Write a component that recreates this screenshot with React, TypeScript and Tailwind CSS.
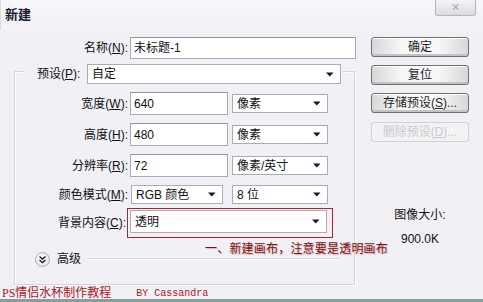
import React from "react";

const Arrow = () => (
  <svg width="8" height="5" viewBox="0 0 8 5" className="shrink-0">
    <path d="M0 0.5h7.5L3.75 4.5z" fill="#15153a" />
  </svg>
);

function Select({
  text,
  className,
}: {
  text: string;
  className: string;
}) {
  return (
    <div
      className={
        "flex items-center justify-between bg-white border border-[#a7adbb] pl-[4px] pr-[6px] shrink-0 " +
        className
      }
    >
      <span className="whitespace-nowrap">{text}</span>
      <Arrow />
    </div>
  );
}

function Input({ text, className }: { text: string; className: string }) {
  return (
    <div
      className={
        "flex items-center bg-white border border-[#a5abb8] border-t-[#8f96a6] pl-[3px] shrink-0 " +
        className
      }
    >
      <span className="whitespace-nowrap">{text}</span>
    </div>
  );
}

function Label({ children, className }: { children: React.ReactNode; className: string }) {
  return <div className={"whitespace-nowrap shrink-0 " + className}>{children}</div>;
}

const U = ({ c }: { c: string }) => <span className="underline underline-offset-[1px]">{c}</span>;

function Btn({ children, disabled }: { children: React.ReactNode; disabled?: boolean }) {
  return (
    <div
      className={
        "h-[20px] w-[98px] rounded-[3px] flex items-center justify-center whitespace-nowrap " +
        (disabled
          ? "border border-[#cfd0d4] bg-[#f3f3f5] text-[#c8c9cd]"
          : "border border-[#6f7074] bg-[linear-gradient(90deg,#d8d8d8,#f6f6f6_30%,#f6f6f6_70%,#d8d8d8)] text-[#1e1e1e] shadow-[inset_0_1px_0_#ffffff,inset_0_-2px_0_#c4c4c4]")
      }
    >
      {children}
    </div>
  );
}

export default function App() {
  return (
    <div className="w-[483px] h-[302px] overflow-hidden relative bg-[#f0f0f5] text-[12px] leading-[14px] text-[#111] font-['Liberation_Sans','Noto_Sans_CJK_SC',sans-serif] flex flex-col">
      {/* title bar */}
      <div className="h-[30px] flex items-start justify-between bg-[linear-gradient(#f7f7fa,#f1f1f6)] border-l border-[#d8d8de]">
        <div className="pl-[4px] pt-[7px] text-[13px] leading-[16px] font-bold text-[#1a1a30]">新建</div>
        <div className="mr-[7px] w-[41px] h-[16px] border border-t-0 border-[#b4b4ba] rounded-b-[3px] bg-[linear-gradient(#f4f4f6,#dcdce0)] flex items-center justify-center text-[#a8a8b0] text-[11px] leading-[11px]">
          ✕
        </div>
      </div>

      {/* body */}
      <div className="h-[257px] flex">
        {/* left */}
        <div className="w-[358px] flex flex-col shrink-0">
          <div className="mt-[7px] h-[22px] flex items-center">
            <Label className="w-[128px] text-right">
              名称(<U c="N" />):
            </Label>
            <Input text="未标题-1" className="ml-[2px] w-[226px] h-[22px]" />
          </div>

          <div className="mt-[12px] ml-[14px] w-[341px] h-[214px] border border-[#d3d6de] shadow-[inset_1px_1px_0_#ffffff,1px_1px_0_#ffffff] flex flex-col">
            <div className="-mt-[8px] ml-[10px] w-[318px] h-[20px] flex items-center bg-[#f0f0f5]">
              <Label className="w-[62px] pl-[12px]">
                预设(<U c="P" />):
              </Label>
              <Select text="自定" className="w-[254px] h-[20px]" />
            </div>

            <div className="mt-[8px] h-[23px] flex items-center">
              <Label className="w-[113px] text-right">
                宽度(<U c="W" />):
              </Label>
              <Input text="640" className="ml-[2px] w-[98px] h-[23px]" />
              <Select text="像素" className="ml-[4px] w-[96px] h-[19px]" />
            </div>

            <div className="mt-[8px] h-[23px] flex items-center">
              <Label className="w-[113px] text-right">
                高度(<U c="H" />):
              </Label>
              <Input text="480" className="ml-[2px] w-[98px] h-[23px]" />
              <Select text="像素" className="ml-[4px] w-[96px] h-[19px]" />
            </div>

            <div className="mt-[8px] h-[23px] flex items-center">
              <Label className="w-[113px] text-right">
                分辨率(<U c="R" />):
              </Label>
              <Input text="72" className="ml-[2px] w-[98px] h-[23px]" />
              <Select text="像素/英寸" className="ml-[4px] w-[96px] h-[19px]" />
            </div>

            <div className="mt-[8px] h-[19px] flex items-center">
              <Label className="w-[113px] text-right">
                颜色模式(<U c="M" />):
              </Label>
              <Select text="RGB 颜色" className="ml-[3px] w-[92px] h-[19px]" />
              <Select text="8 位" className="ml-[9px] w-[96px] h-[19px]" />
            </div>

            <div className="mt-[4px] h-[30px] flex items-center">
              <Label className="w-[112px] text-right pr-[1px]">
                背景内容(<U c="C" />):
              </Label>
              <div className="w-[206px] h-[30px] border border-[#9c2a3a] bg-[#fbeef0] pl-[2px] pt-[1px] shrink-0">
                <Select text="透明" className="w-[197px] h-[23px]" />
              </div>
            </div>

            <div className="mt-[13px] h-[16px] flex items-center">
              <div className="ml-[20px] w-[15px] h-[15px] rounded-full border border-[#a9abb4] bg-[radial-gradient(circle_at_40%_35%,#ffffff,#dcdde3)] flex items-center justify-center shrink-0">
                <svg width="9" height="9" viewBox="0 0 9 9">
                  <path d="M1.5 1.5L4.5 4L7.5 1.5M1.5 5L4.5 7.5L7.5 5" fill="none" stroke="#1e1e2a" strokeWidth="1.4" />
                </svg>
              </div>
              <div className="ml-[7px] whitespace-nowrap">高级</div>
              <div className="ml-[7px] mr-[14px] flex-1 h-[2px] border-t border-[#d6d8df] border-b-white border-b" />
            </div>
          </div>
        </div>

        {/* right */}
        <div className="ml-[13px] w-[98px] flex flex-col items-center">
          <div className="mt-[7px]">
            <Btn>确定</Btn>
          </div>
          <div className="mt-[8px]">
            <Btn>复位</Btn>
          </div>
          <div className="mt-[8px]">
            <Btn>
              存储预设(<U c="S" />)...
            </Btn>
          </div>
          <div className="mt-[9px]">
            <Btn disabled>
              删除预设(<U c="D" />)...
            </Btn>
          </div>
          <div className="mt-[65px] leading-[16px] whitespace-nowrap">图像大小:</div>
          <div className="mt-[8px] leading-[16px] whitespace-nowrap">900.0K</div>
        </div>
      </div>

      {/* footer */}
      <div className="h-[15px] flex items-start border-b-[3px] border-[#7ea39c] bg-[#f0f0f5]">
        <div className="pl-[2px] text-[12px] leading-[12px] text-[#b0161e] whitespace-nowrap font-['Liberation_Serif','Noto_Sans_CJK_SC',serif]">
          PS情侣水杯制作教程
        </div>
        <div className="ml-[25px] mt-[1px] text-[10px] leading-[12px] text-[#b0161e] whitespace-nowrap font-['Liberation_Mono',monospace]">
          BY Cassandra
        </div>
      </div>

      {/* annotation overlay */}
      <div className="absolute left-[205px] top-[240px] text-[12px] leading-[16px] tracking-[0.2px] text-[#8e0c10] whitespace-nowrap [text-shadow:1px_1px_1px_#b8b8b8] font-['Noto_Sans_CJK_SC',sans-serif]">
        一、新建画布，注意要是透明画布
      </div>
    </div>
  );
}
